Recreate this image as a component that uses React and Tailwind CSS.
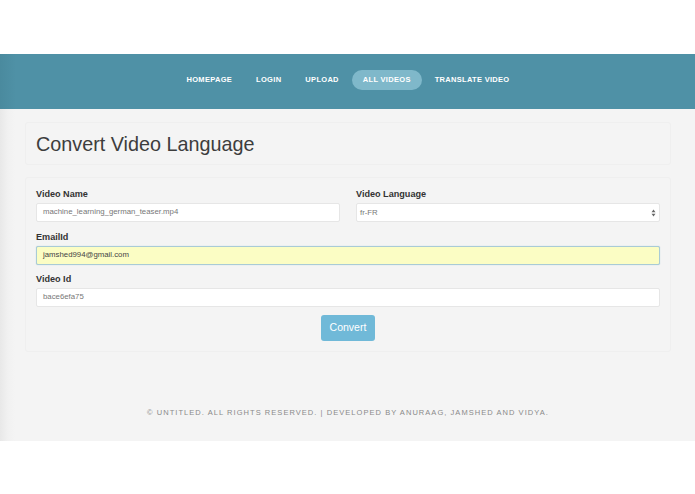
const links = [
  { label: "HOMEPAGE" },
  { label: "LOGIN" },
  { label: "UPLOAD" },
  { label: "ALL VIDEOS", active: true },
  { label: "TRANSLATE VIDEO" },
];

const labelClass = "block text-[9.1px] font-bold leading-[12px] text-[#333333]";

const inputClass =
  "h-[19px] w-full rounded-[2px] border border-[#e6e6e6] bg-white pl-[6px] text-[7.8px] leading-[16px] text-[#777777]";

const App = () => {
  return (
    <div className="h-[494px] w-[695px] overflow-hidden bg-white pt-[54px] font-['Liberation_Sans',Arial,sans-serif]">
      <header className="flex h-[55px] items-center justify-center bg-[linear-gradient(to_right,#4a8a9e,#4f91a6_16px)] pb-[3px]">
        <nav className="ml-[1px] flex items-center text-[7.5px] font-bold tracking-[0.3px] text-white">
          {links.map((link) => (
            <a
              key={link.label}
              className={
                link.active
                  ? "ml-[1px] mr-[1px] flex h-[20px] items-center rounded-full bg-[#7fb8ca] px-[11px]"
                  : "flex h-[20px] items-center px-[12px]"
              }
            >
              {link.label}
            </a>
          ))}
        </nav>
      </header>

      <main className="h-[332px] bg-[linear-gradient(to_right,#e8e8e8,#f1f1f1_8px,#f4f4f4_15px)] pl-[25px] pr-[24px] pt-[13px]">
        <div className="flex h-[43px] items-center rounded-[3px] border border-[#efefef] pl-[10px]">
          <h1 className="mt-[2px] text-[19.8px] leading-none text-[#3d3d3d]">
            Convert Video Language
          </h1>
        </div>

        <form className="mt-[12px] h-[175px] rounded-[3px] border border-[#efefef] px-[10px] pt-[10px]">
          <div className="flex gap-[16px]">
            <div className="w-[304px]">
              <label className={labelClass}>Video Name</label>
              <div className={`${inputClass} mt-[3px]`}>
                machine_learning_german_teaser.mp4
              </div>
            </div>
            <div className="flex-1">
              <label className={labelClass}>Video Language</label>
              <div className="mt-[3px] flex h-[19px] items-center justify-between rounded-[2px] border border-[#e6e6e6] bg-white pl-[3px] pr-[3px] text-[7.8px] text-[#777777]">
                <span>fr-FR</span>
                <svg width="5" height="8" viewBox="0 0 5 8" fill="#666666">
                  <path d="M2.5 0.5 L4.5 3.2 L0.5 3.2 Z" />
                  <path d="M2.5 7.5 L4.5 4.8 L0.5 4.8 Z" />
                </svg>
              </div>
            </div>
          </div>

          <label className={`${labelClass} mt-[9px]`}>EmailId</label>
          <div className="mt-[3px] h-[19px] w-full rounded-[2px] border border-[#a9cbd6] bg-[#fbfdc4] pl-[6px] text-[7.8px] leading-[16px] text-[#444444] shadow-[0_0_1px_#9fc5d2]">
            jamshed994@gmail.com
          </div>

          <label className={`${labelClass} mt-[8px]`}>Video Id</label>
          <div className={`${inputClass} mt-[3px]`}>bace6efa75</div>

          <div className="mt-[8px] flex justify-center">
            <button
              type="button"
              className="h-[26px] w-[54px] rounded-[3px] bg-[#70b9d8] text-[10.5px] text-white"
            >
              Convert
            </button>
          </div>
        </form>

        <footer className="mt-[56px] text-center text-[7.5px] leading-[10px] tracking-[1.05px] text-[#8a8a8a]">
          © UNTITLED. ALL RIGHTS RESERVED. | DEVELOPED BY ANURAAG, JAMSHED AND VIDYA.
        </footer>
      </main>
    </div>
  );
};

export default App;
